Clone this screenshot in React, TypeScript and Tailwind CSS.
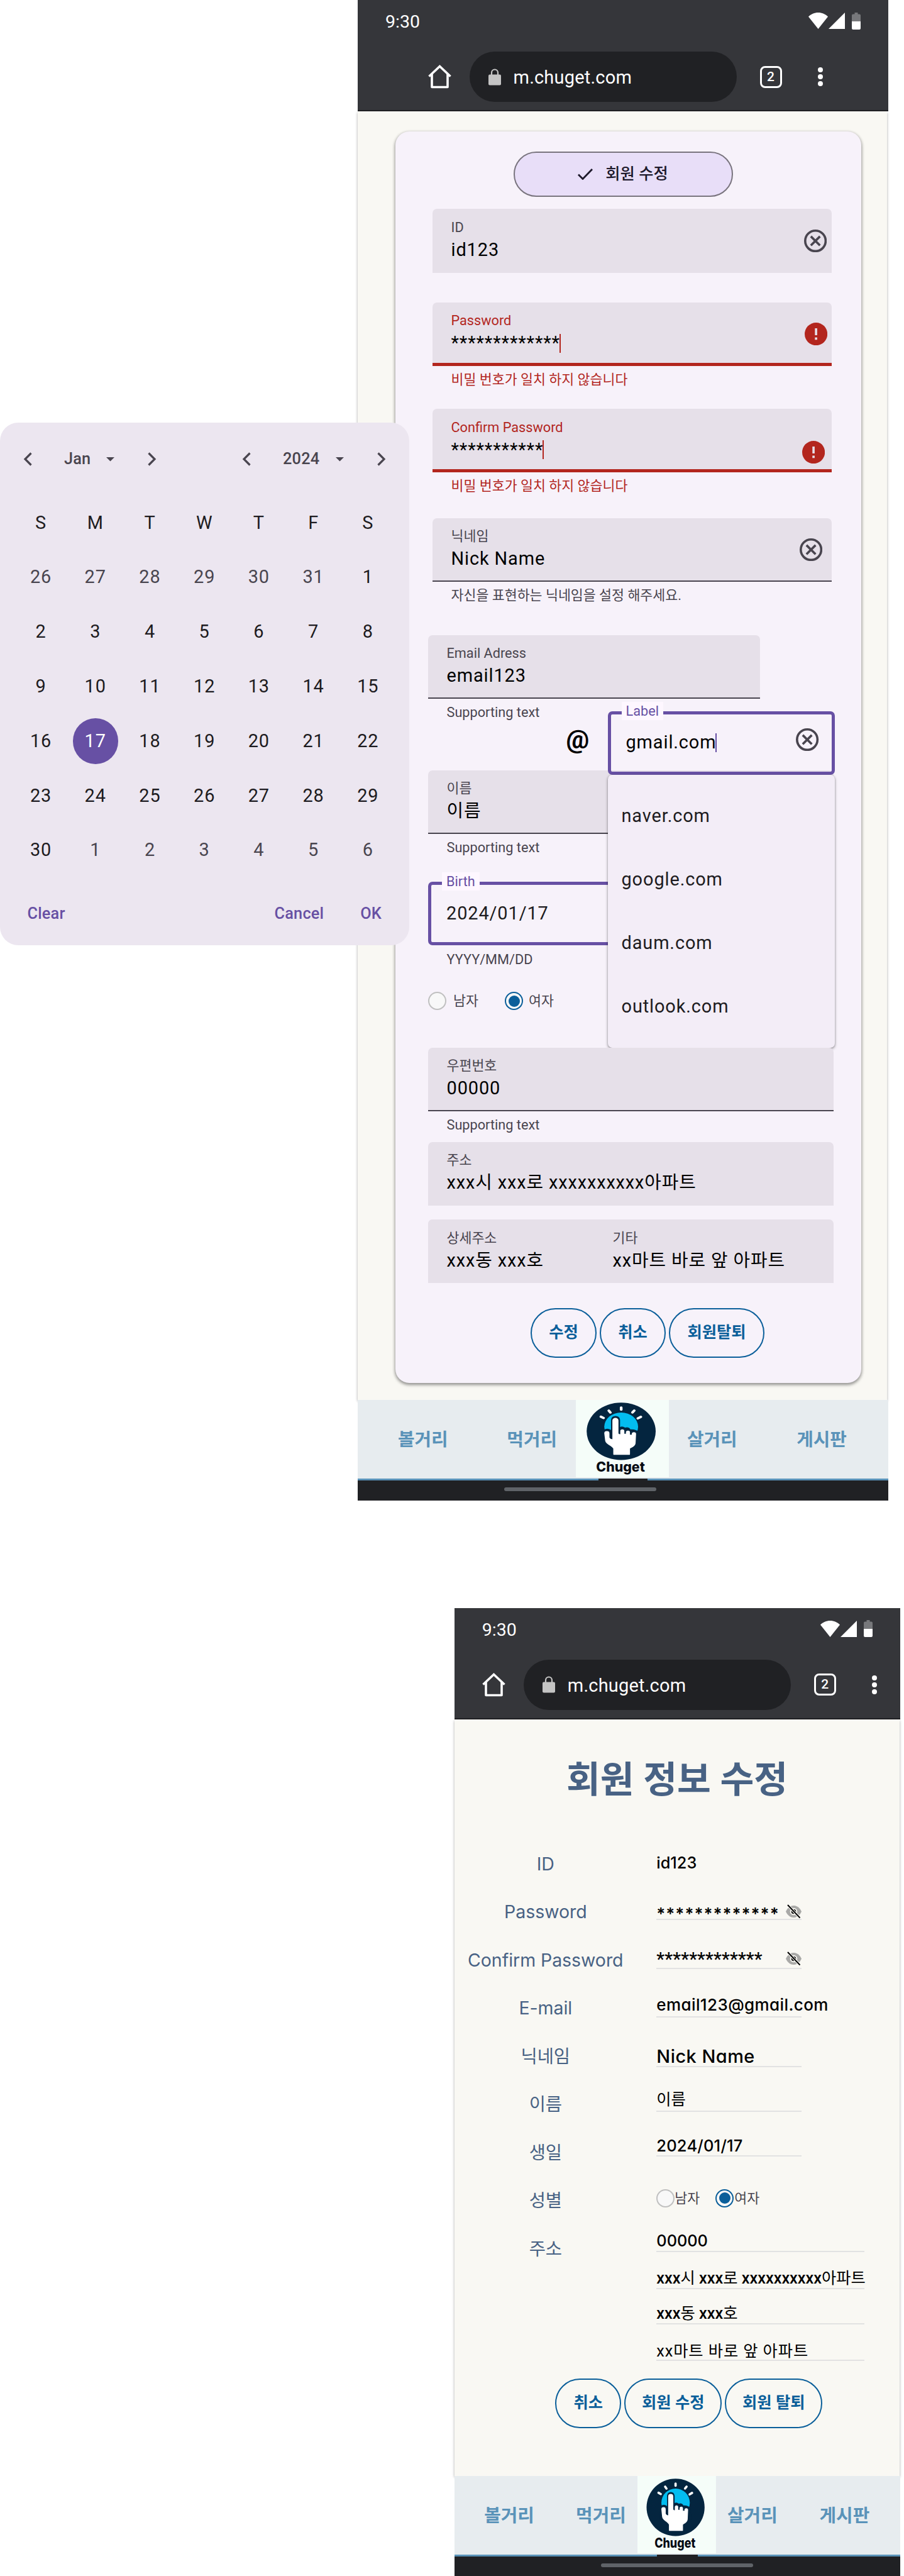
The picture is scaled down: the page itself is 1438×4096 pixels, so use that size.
import React from "react";

function WifiIcon() {
  return (
    <svg className="h-[26px] w-[31px]" viewBox="0 0 31 26">
      <path d="M15.5 26 0 6.6C4 2.4 9.500 0 15.500 0S27 2.400 31 6.600Z" fill="#fff" />
    </svg>
  );
}

function SignalIcon() {
  return (
    <svg className="h-[26px] w-[26px]" viewBox="0 0 26 26">
      <path d="M26 0V26H0Z" fill="#fff" />
    </svg>
  );
}

function BatteryIcon() {
  return (
    <svg className="h-[27px] w-[14px]" viewBox="0 0 14 27">
      <path d="M4.500 0h5v2.500H12a2 2 0 0 1 2 2V14H0V4.500a2 2 0 0 1 2-2h2.500Z" fill="#77787b" />
      <path d="M0 14h14v11a2 2 0 0 1-2 2H2a2 2 0 0 1-2-2Z" fill="#fff" />
    </svg>
  );
}

function HomeIcon() {
  return (
    <svg className="h-[38px] w-[37px]" viewBox="0 0 37 38" fill="none" stroke="#fff" strokeWidth="3.600">
      <path d="M1.500 18.500 18.500 2.500 35.500 18.500" />
      <path d="M6 15v20.500h25V15" strokeLinejoin="round" />
    </svg>
  );
}

function LockIcon() {
  return (
    <svg className="h-[27px] w-[20px]" viewBox="0 0 20 27">
      <path d="M5 11V6.500a5 5 0 0 1 10 0V11" fill="none" stroke="#c4c4c4" strokeWidth="2.200" />
      <rect y="9.500" width="20" height="17" rx="2" fill="#c4c4c4" />
    </svg>
  );
}

function BrowserHeader({ inset }: { inset: string }) {
  return (
    <header className="h-[177px] border-b-2 border-[#202124] bg-[#35363a] text-white">
      <div className="flex h-[66px] items-center justify-between px-[44px]">
        <span className="text-[28.500px] leading-[30px] pt-[4px]">9:30</span>
        <div className="flex items-center">
          <WifiIcon />
          <span className="w-px" />
          <SignalIcon />
          <span className="w-[11px]" />
          <BatteryIcon />
        </div>
      </div>
      <div className={`mt-[16px] flex h-[80px] items-center ${inset}`}>
        <HomeIcon />
        <div className="ml-[29px] flex h-[80px] w-[425px] items-center rounded-full bg-[#202124] pl-[30px]">
          <LockIcon />
          <span className="ml-[20px] pt-[3px] text-[29px] tracking-[0.2px]">m.chuget.com</span>
        </div>
        <div className="ml-[37px] flex h-[35px] w-[35px] items-center justify-center rounded-[8px] border-[3px] border-white text-[21px] font-medium leading-none">
          2
        </div>
        <div className="ml-[57px] flex flex-col gap-[3px]">
          <i className="size-[8px] rounded-full bg-white" />
          <i className="size-[8px] rounded-full bg-white" />
          <i className="size-[8px] rounded-full bg-white" />
        </div>
      </div>
    </header>
  );
}

function ChugetLogo() {
  return (
    <svg className="h-[123px] w-full" viewBox="6 10 414 407" preserveAspectRatio="none">
      <rect x="6" y="10" width="414" height="407" fill="#f5fdf9" />
      <ellipse cx="207" cy="175" rx="153" ry="151" fill="#04253f" />
      <circle cx="207" cy="151" r="75" fill="#03bdf0" />
      <path
        d="M121 173Q142 152 162 168V114Q164 94 182 94T202 114V152Q214 147 224 156Q240 150 248 165Q274 163 286 180L290 240H125Z"
        fill="#04253f"
      />
      <g stroke="#fff" strokeWidth="12" strokeLinecap="round">
        <path d="M207 50V61" />
        <path d="M152 66 159 76" />
        <path d="M265 66 257 76" />
        <path d="M117 98 129 105" />
        <path d="M294 99 281 107" />
      </g>
      <path
        d="M132 185a11 11 0 0 1 23 0v22q2 9 13 10V118a13.500 13.500 0 0 1 27 0v68q2 4 8 4v-16a9 9 0 0 1 18 0v14h7v-8a9 9 0 0 1 18 0v13h8v-4a9 9 0 0 1 19 0l-2 46q0 14-12 22l-13 9v29q0 4-4 4h-66q-4 0-4-4v-29q-4-8-12-14-23-15-24-28Z"
        fill="#fff"
      />
      <text
        x="96"
        y="388"
        textLength="216"
        lengthAdjust="spacingAndGlyphs"
        fontFamily="Inter, sans-serif"
        fontSize="69"
        fontWeight="800"
        fill="#060b14"
        style={{ fontFeatureSettings: "'cv11'" }}
      >
        Chuget
      </text>
    </svg>
  );
}

function BottomNav({ bar }: { bar: string }) {
  return (
    <footer className="bg-[#202124]">
      <nav className="grid h-[125px] grid-cols-[24.600fr_16.500fr_17.600fr_16.200fr_25.100fr] items-center bg-[#e7ecef] text-center text-[28.900px] font-bold leading-[34px] text-[#5a93b9]">
        <span className="pt-[2px]">볼거리</span>
        <span className="pt-[2px]">먹거리</span>
        <div className="h-[125px]">
          <ChugetLogo />
        </div>
        <span className="pt-[2px]">살거리</span>
        <span className="pt-[2px]">게시판</span>
      </nav>
      <div className="flex h-[3px] justify-between">
        <i className="h-full w-[45.400%] bg-[#5a93b9]" />
        <i className="h-full w-[45.400%] bg-[#5a93b9]" />
      </div>
      <div className="h-[32px] pt-[11px]">
        <i className={`block h-[6px] rounded-full bg-[#5f6368] ${bar}`} />
      </div>
    </footer>
  );
}

function ClearIcon() {
  return (
    <svg className="size-[36.200px]" viewBox="0 0 20 20" fill="none" stroke="#49454f" strokeWidth="2">
      <circle cx="10" cy="10" r="9" />
      <path d="m6 6 8 8M14 6l-8 8" />
    </svg>
  );
}

function ErrorIcon() {
  return (
    <svg className="size-[36.200px]" viewBox="0 0 20 20">
      <circle cx="10" cy="10" r="10" fill="#b3261e" />
      <path d="M9 5h2v6H9zM9 13h2v2H9z" fill="#e6e0e9" />
    </svg>
  );
}

type FieldProps = {
  label: string;
  value: string;
  box?: string;
  error?: boolean;
  line?: boolean;
  caret?: boolean;
  support?: string;
  icon?: React.ReactNode;
  iconPlace?: string;
};

function Field({ label, value, box = "ml-[52px] w-[645px]", error, line, caret, support, icon, iconPlace = "" }: FieldProps) {
  return (
    <div className={`relative ${box}`}>
      <div
        className={`flex h-[101.200px] justify-between rounded-t-[7px] bg-[#e6e0e9] pl-[29.500px] pt-[14.500px] ${
          error ? "border-b-[5px] border-[#b3261e]" : line ? "border-b-2 border-[#49454f]" : ""
        }`}
      >
        <div>
          <div className={`text-[21.700px] leading-[29px] ${error ? "text-[#b3261e]" : "text-[#49454f]"}`}>{label}</div>
          <div className="flex h-[43px] items-center text-[28.900px] leading-[43px] tracking-[0.900px] text-black">
            {value}
            {caret && <i className="-ml-px h-[30px] w-[2px] bg-[#b3261e]" />}
          </div>
        </div>
        {icon && <div className={iconPlace}>{icon}</div>}
      </div>
      {support && (
        <p className={`ml-[29.500px] mt-[7px] h-[29px] text-[21.700px] leading-[29px] ${error ? "text-[#b3261e]" : "text-[#49454f]"}`}>
          {support}
        </p>
      )}
    </div>
  );
}

function Radio({ on }: { on?: boolean }) {
  return on ? (
    <i className="flex size-[29px] items-center justify-center rounded-full border-2 border-[#0b5f9a] bg-[#f8f8f8]">
      <i className="size-[18px] rounded-full bg-[#0b5f9a]" />
    </i>
  ) : (
    <i className="size-[29px] rounded-full border-2 border-[#c0c0c0] bg-[#f8f8f8]" />
  );
}

function Pill({ children, w }: { children: string; w: string }) {
  return (
    <button
      className={`flex h-[79px] items-center justify-center rounded-full border-2 border-[#0b5f9a] pb-px text-[25.300px] font-bold text-[#0b5f9a] ${w}`}
    >
      {children}
    </button>
  );
}

function EditPhone() {
  return (
    <section className="ml-[569px] w-[844px]">
      <BrowserHeader inset="pl-[111.500px]" />
      <main className="h-[2048.600px] w-[842px] bg-[#f9f8f3] pt-[32px] shadow-[0_2px_4px_rgba(0,0,0,0.350)]">
        <div className="ml-[60px] h-[1989.600px] w-[741px] rounded-[22px] bg-[#f7f2fa] pt-[32px] shadow-[0_2px_4px_1px_rgba(0,0,0,0.300),0_3px_6px_rgba(0,0,0,0.150)]">
          <div className="ml-[187.500px] flex h-[72px] w-[349px] items-center justify-center rounded-full border-2 border-[#79747e] bg-[#e8def8] text-[25.300px] font-medium text-[#1d192b]">
            <svg className="mr-[20px] h-[18px] w-[24px]" viewBox="0 0 24 18" fill="none" stroke="#1d192b" strokeWidth="2.800">
              <path d="M1 9.500 8 16.500 23 1" />
            </svg>
            <span>회원 수정</span>
          </div>
          <Field label="ID" value="id123" box="mt-[19.400px] ml-[59px] w-[635px]" icon={<ClearIcon />} iconPlace="mr-[8px] mt-[18px]" />
          <Field label="Password" value="*************" error caret support="비밀 번호가 일치 하지 않습니다" box="mt-[47px] ml-[59px] w-[635px]" icon={<ErrorIcon />} iconPlace="mr-[7px] mt-[18px]" />
          <Field label="Confirm Password" value="***********" error caret support="비밀 번호가 일치 하지 않습니다" box="mt-[32.500px] ml-[59px] w-[635px]" icon={<ErrorIcon />} iconPlace="mr-[11px] mt-[36px]" />
          <Field label="닉네임" value="Nick Name" line support="자신을 표현하는 닉네임을 설정 해주세요." box="mt-[36.300px] ml-[59px] w-[635px]" icon={<ClearIcon />} iconPlace="mr-[15px] mt-[18px]" />
          <Field label="Email Adress" value="email123" line box="mt-[49px] ml-[52px] w-[528px]" />
          <div className="relative z-10 flex h-[113.700px] items-start">
            <p className="ml-[81.500px] mt-[7px] w-[190px] text-[21.700px] leading-[29px] text-[#49454f]">Supporting text</p>
            <span className="mt-[42px] w-[38px] text-[41px] font-bold leading-[46px] text-black">@</span>
            <div className="relative ml-[28px] mt-[20px] h-[101px] w-[361px] shrink-0 rounded-[7px] border-[5.400px] border-[#6750a4]">
              <span className="absolute -top-[20px] left-[17px] bg-[#fef7ff] px-[7px] text-[21.700px] leading-[29px] text-[#6750a4]">Label</span>
              <div className="flex h-[90px] items-center justify-between pl-[24px] pr-[20px] text-[28.900px] tracking-[0.900px] text-black">
                <span className="flex items-center">
                  gmail.com
                  <i className="-ml-px h-[30px] w-[2px] bg-[#6750a4]" />
                </span>
                <span className="-mt-[10px]">
                  <ClearIcon />
                </span>
              </div>
              <ul className="absolute -left-[5px] top-[95.500px] h-[434px] w-[361px] rounded-[7px] bg-[#f3edf7] py-[15px] shadow-[0_2px_4px_1px_rgba(0,0,0,0.180),0_1px_3px_rgba(0,0,0,0.300)]">
                {["naver.com", "google.com", "daum.com", "outlook.com"].map((d) => (
                  <li key={d} className="flex h-[101.300px] items-center pl-[22px] text-[28.900px] tracking-[0.900px] text-[#1d1b20]">
                    {d}
                  </li>
                ))}
              </ul>
            </div>
          </div>
          <Field label="이름" value="이름" line support="Supporting text" />
          <div className="relative ml-[52px] mt-[40px] h-[101px] w-[645px] rounded-[7px] border-[5.400px] border-[#6750a4]">
            <span className="absolute -top-[20px] left-[17px] bg-[#fef7ff] px-[7px] text-[21.700px] leading-[29px] text-[#6750a4]">Birth</span>
            <div className="flex h-[90px] items-center pl-[24px] pt-px text-[28.900px] tracking-[0.900px] text-[#1d1b20]">2024/01/17</div>
          </div>
          <p className="ml-[81.500px] mt-[7.500px] text-[21.700px] leading-[29px] text-[#49454f]">YYYY/MM/DD</p>
          <div className="ml-[52px] mt-[37.500px] flex h-[29px] items-center text-[21.700px] leading-[29px] text-[#49454f]">
            <Radio />
            <span className="ml-[11px] w-[82px]">남자</span>
            <Radio on />
            <span className="ml-[9px]">여자</span>
          </div>
          <Field label="우편번호" value="00000" line support="Supporting text" box="z-20 mt-[59.700px] ml-[52px] w-[645px]" />
          <Field label="주소" value="xxx시 xxx로 xxxxxxxxxx아파트" box="mt-[13px] ml-[52px] w-[645px]" />
          <div className="ml-[52px] mt-[22px] flex w-[645px] rounded-t-[7px] bg-[#e6e0e9]">
            <Field label="상세주소" value="xxx동 xxx호" box="w-[264px]" />
            <Field label="기타" value="xx마트 바로 앞 아파트" box="w-[370px]" />
          </div>
          <div className="ml-[215px] mt-[39.500px] flex gap-[5px]">
            <Pill w="w-[105px]">수정</Pill>
            <Pill w="w-[105px]">취소</Pill>
            <Pill w="w-[152px]">회원탈퇴</Pill>
          </div>
        </div>
      </main>
      <BottomNav bar="ml-[233px] w-[242px]" />
    </section>
  );
}

function EyeOff() {
  return (
    <svg className="h-[23px] w-[25px]" viewBox="0 0 25 23">
      <path d="M0 11.500C3 5 7.500 2 12.500 2S22 5 25 11.500C22 18 17.500 21 12.500 21S3 18 0 11.500Z" fill="#a9a9a7" />
      <circle cx="12.500" cy="11.500" r="5.800" fill="#f9f8f3" />
      <circle cx="12.500" cy="11.500" r="3.800" fill="#111" />
      <circle cx="12.500" cy="11.500" r="1.500" fill="#f9f8f3" />
      <path d="M2 0 22.500 21.500" stroke="#f9f8f3" strokeWidth="4" />
      <path d="M3 1 22.500 21.500" stroke="#000" strokeWidth="2" />
    </svg>
  );
}

function InfoRow({ label, children }: { label: string; children: React.ReactNode }) {
  return (
    <div className="flex h-[76.500px]">
      <div className="flex w-[290px] shrink-0 items-center justify-center pb-[2px] text-[28.500px] tracking-[-0.050px] text-[#486284]">{label}</div>
      <div className="ml-[31.500px]">{children}</div>
    </div>
  );
}

const line = "flex items-end whitespace-nowrap border-b-2 border-[#e2e2e2] text-black font-medium leading-[30px] [font-feature-settings:'cv11']";
const address = "font-[Roboto,'Noto_Sans_CJK_KR'] font-normal";

function InfoPhone() {
  return (
    <section className="ml-[722.800px] mt-[171.200px] w-[709.700px]">
      <BrowserHeader inset="pl-[44px]" />
      <main className="h-[1203px] w-[708.500px] bg-[#f9f8f3] pt-[60px] shadow-[0_2px_4px_rgba(0,0,0,0.350)]">
        <h1 className="h-[72px] text-center text-[58.500px] font-bold leading-[72px] text-[#486284]">회원 정보 수정</h1>
        <div className="mt-[61px] h-[855px] font-[Inter,'Noto_Sans_CJK_KR',sans-serif]">
          <InfoRow label="ID">
            <div className="pt-[20px] text-[25.300px] font-medium leading-[30px] text-black">id123</div>
          </InfoRow>
          <InfoRow label="Password">
            <div className={`${line} h-[50px] w-[231px] justify-between`}>
              <span className="-mb-[7px] text-[26px] font-semibold tracking-[1px]">*************</span>
              <EyeOff />
            </div>
          </InfoRow>
          <InfoRow label="Confirm Password">
            <div className={`${line} h-[51px] w-[231px] justify-between`}>
              <span className="-mb-px font-[Roboto] text-[28.900px] tracking-[0.150px]">*************</span>
              <span className="mb-[3px]">
                <EyeOff />
              </span>
            </div>
          </InfoRow>
          <InfoRow label="E-mail">
            <div className={`${line} h-[52px] w-[231px] pb-[3px] text-[26px] tracking-[0.400px]`}>email123@gmail.com</div>
          </InfoRow>
          <InfoRow label="닉네임">
            <div className={`${line} h-[54px] w-[231px] text-[28.900px] tracking-[0.500px]`}>Nick Name</div>
          </InfoRow>
          <InfoRow label="이름">
            <div className={`${line} h-[49px] w-[231px] pb-[3px] text-[25.300px]`}>
              <span className="font-normal">이름</span>
            </div>
          </InfoRow>
          <InfoRow label="생일">
            <div className={`${line} h-[43px] w-[231px] text-[25.500px] tracking-[0.200px]`}>2024/01/17</div>
          </InfoRow>
          <InfoRow label="성별">
            <div className="flex h-[66px] items-center text-[21.700px] leading-[29px] text-[#49454f]">
              <Radio />
              <span className="w-[65px]">남자</span>
              <Radio on />
              <span className="ml-[1px]">여자</span>
            </div>
          </InfoRow>
          <InfoRow label="주소">
            <div className={`${line} h-[42px] w-[331px] pb-[1px] text-[25.300px]`}>00000</div>
            <div className={`${line} h-[59.500px] w-[331px] text-[25.300px]`}>
              <span className={address}>
                <span className="font-medium">xxx</span>시 <span className="font-medium">xxx</span>로{" "}
                <span className="font-medium">xxxxxxxxxx</span>아파트
              </span>
            </div>
            <div className={`${line} h-[56px] w-[331px] text-[25.300px]`}>
              <span className={address}>
                <span className="font-medium">xxx</span>동 <span className="font-medium">xxx</span>호
              </span>
            </div>
            <div className={`${line} h-[58px] w-[331px] text-[25.300px]`}>
              <span className={`${address} -mb-[2px] tracking-[0.900px]`}>xx마트 바로 앞 아파트</span>
            </div>
          </InfoRow>
        </div>
        <div className="ml-[160.500px] flex gap-[5px]">
          <Pill w="w-[105px]">취소</Pill>
          <Pill w="w-[155px]">회원 수정</Pill>
          <Pill w="w-[155px]">회원 탈퇴</Pill>
        </div>
      </main>
      <BottomNav bar="ml-[233px] w-[242px]" />
    </section>
  );
}

function Chevron({ right }: { right?: boolean }) {
  return (
    <svg className="h-[22px] w-[14px]" viewBox="0 0 14 22" fill="none" stroke="#49454f" strokeWidth="3.200">
      <path d={right ? "M1.500 1.500 11 11 1.500 20.500" : "M12.500 1.500 3 11 12.500 20.500"} />
    </svg>
  );
}

function Caret() {
  return (
    <svg className="h-[7px] w-[13px]" viewBox="0 0 13 7">
      <path d="M0 0H13L6.500 6.500Z" fill="#49454f" />
    </svg>
  );
}

function Calendar() {
  const cells = [
    ..."SMTWTFS".split(""),
    ...[26, 27, 28, 29, 30, 31],
    ...Array.from({ length: 30 }, (_, i) => i + 1),
    ...[1, 2, 3, 4, 5, 6],
  ];
  return (
    <aside className="absolute left-0 top-[672px] h-[831px] w-[651px] rounded-[29px] bg-[#ece6f0]">
      <div className="flex h-[116px] items-center text-[25.300px] font-medium tracking-[0.200px] text-[#49454f]">
        <span className="ml-[37px]">
          <Chevron />
        </span>
        <span className="ml-[51px] w-[67px]">Jan</span>
        <Caret />
        <span className="ml-[53px]">
          <Chevron right />
        </span>
        <span className="ml-[136px]">
          <Chevron />
        </span>
        <span className="ml-[51px] w-[84px]">2024</span>
        <Caret />
        <span className="ml-[53px]">
          <Chevron right />
        </span>
      </div>
      <div className="ml-[21.700px] grid w-[607px] grid-cols-7">
        {cells.map((c, i) => (
          <div key={i} className="flex h-[86.770px] items-center justify-center">
            <span
              className={`flex size-[72.300px] items-center justify-center rounded-full text-[28.900px] tracking-[0.900px] ${
                c === 17 ? "bg-[#6750a4] text-white" : (i > 6 && i < 13) || i > 42 ? "text-[#49454f]" : "text-[#1d1b20]"
              }`}
            >
              {c}
            </span>
          </div>
        ))}
      </div>
      <div className="flex h-[116px] items-center text-[25.300px] font-medium tracking-[0.200px] text-[#6750a4]">
        <span className="ml-[43.500px]">Clear</span>
        <span className="ml-auto">Cancel</span>
        <span className="ml-[58px] mr-[44px]">OK</span>
      </div>
    </aside>
  );
}

export default function App() {
  return (
    <div className="relative h-[4096px] w-[1438px] overflow-hidden bg-white font-[Roboto,'Noto_Sans_CJK_KR',sans-serif]">
      <EditPhone />
      <InfoPhone />
      <Calendar />
    </div>
  );
}
